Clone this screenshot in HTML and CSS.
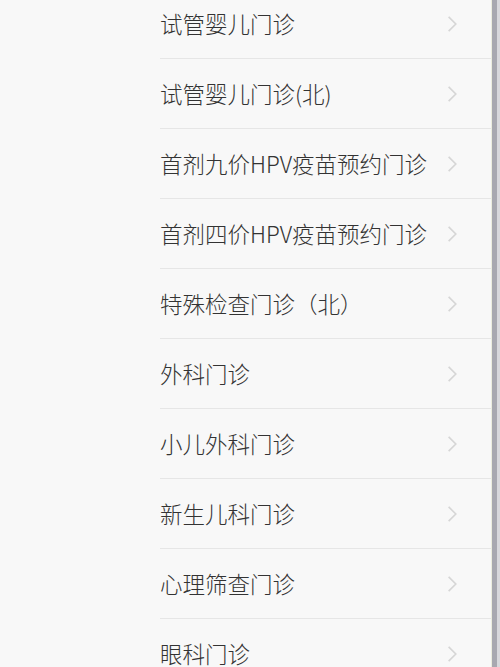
FILE: index.html
```html
<!DOCTYPE html>
<html lang="zh">
<head>
<meta charset="utf-8">
<link rel="stylesheet" href="styles.css">
</head>
<body>
<div class="page">
  <ul class="list">
    <li class="row"><span class="label">试管婴儿门诊</span><svg class="chev" viewBox="0 0 10 16"><path d="M1.5 1.5 L8 8 L1.5 14.5"/></svg></li>
    <li class="row"><span class="label">试管婴儿门诊(北)</span><svg class="chev" viewBox="0 0 10 16"><path d="M1.5 1.5 L8 8 L1.5 14.5"/></svg></li>
    <li class="row"><span class="label">首剂九价HPV疫苗预约门诊</span><svg class="chev" viewBox="0 0 10 16"><path d="M1.5 1.5 L8 8 L1.5 14.5"/></svg></li>
    <li class="row"><span class="label">首剂四价HPV疫苗预约门诊</span><svg class="chev" viewBox="0 0 10 16"><path d="M1.5 1.5 L8 8 L1.5 14.5"/></svg></li>
    <li class="row"><span class="label">特殊检查门诊（北）</span><svg class="chev" viewBox="0 0 10 16"><path d="M1.5 1.5 L8 8 L1.5 14.5"/></svg></li>
    <li class="row"><span class="label">外科门诊</span><svg class="chev" viewBox="0 0 10 16"><path d="M1.5 1.5 L8 8 L1.5 14.5"/></svg></li>
    <li class="row"><span class="label">小儿外科门诊</span><svg class="chev" viewBox="0 0 10 16"><path d="M1.5 1.5 L8 8 L1.5 14.5"/></svg></li>
    <li class="row"><span class="label">新生儿科门诊</span><svg class="chev" viewBox="0 0 10 16"><path d="M1.5 1.5 L8 8 L1.5 14.5"/></svg></li>
    <li class="row"><span class="label">心理筛查门诊</span><svg class="chev" viewBox="0 0 10 16"><path d="M1.5 1.5 L8 8 L1.5 14.5"/></svg></li>
    <li class="row"><span class="label">眼科门诊</span><svg class="chev" viewBox="0 0 10 16"><path d="M1.5 1.5 L8 8 L1.5 14.5"/></svg></li>
  </ul>
  <div class="edge"></div>
</div>
</body>
</html>
```
FILE: styles.css
```css
html, body {
  margin: 0;
  padding: 0;
  height: 100%;
  overflow: hidden;
  background: #f8f8f8;
}
.page {
  display: flex;
  height: 667px;
  font-family: "Noto Sans CJK SC", "Noto Sans", sans-serif;
}
.list {
  list-style: none;
  margin: -11px 0 0 160px;
  padding: 0;
  flex: 1;
}
.row {
  height: 70px;
  box-sizing: border-box;
  border-bottom: 1px solid #e6e6e6;
  display: flex;
  align-items: center;
  justify-content: space-between;
  padding-right: 33px;
}
.label {
  font-size: 22.5px;
  font-weight: 300;
  color: #333;
  line-height: 1;
}
.chev {
  width: 11px;
  height: 18px;
  fill: none;
  stroke: #d6d6d6;
  stroke-width: 1.5;
}
.edge {
  width: 8px;
  border-left: 1px solid #ecedde;
  background: linear-gradient(to right, #a8a8b0 0, #a8a8b0 5px, #d8d8dc 5px);
}
```
